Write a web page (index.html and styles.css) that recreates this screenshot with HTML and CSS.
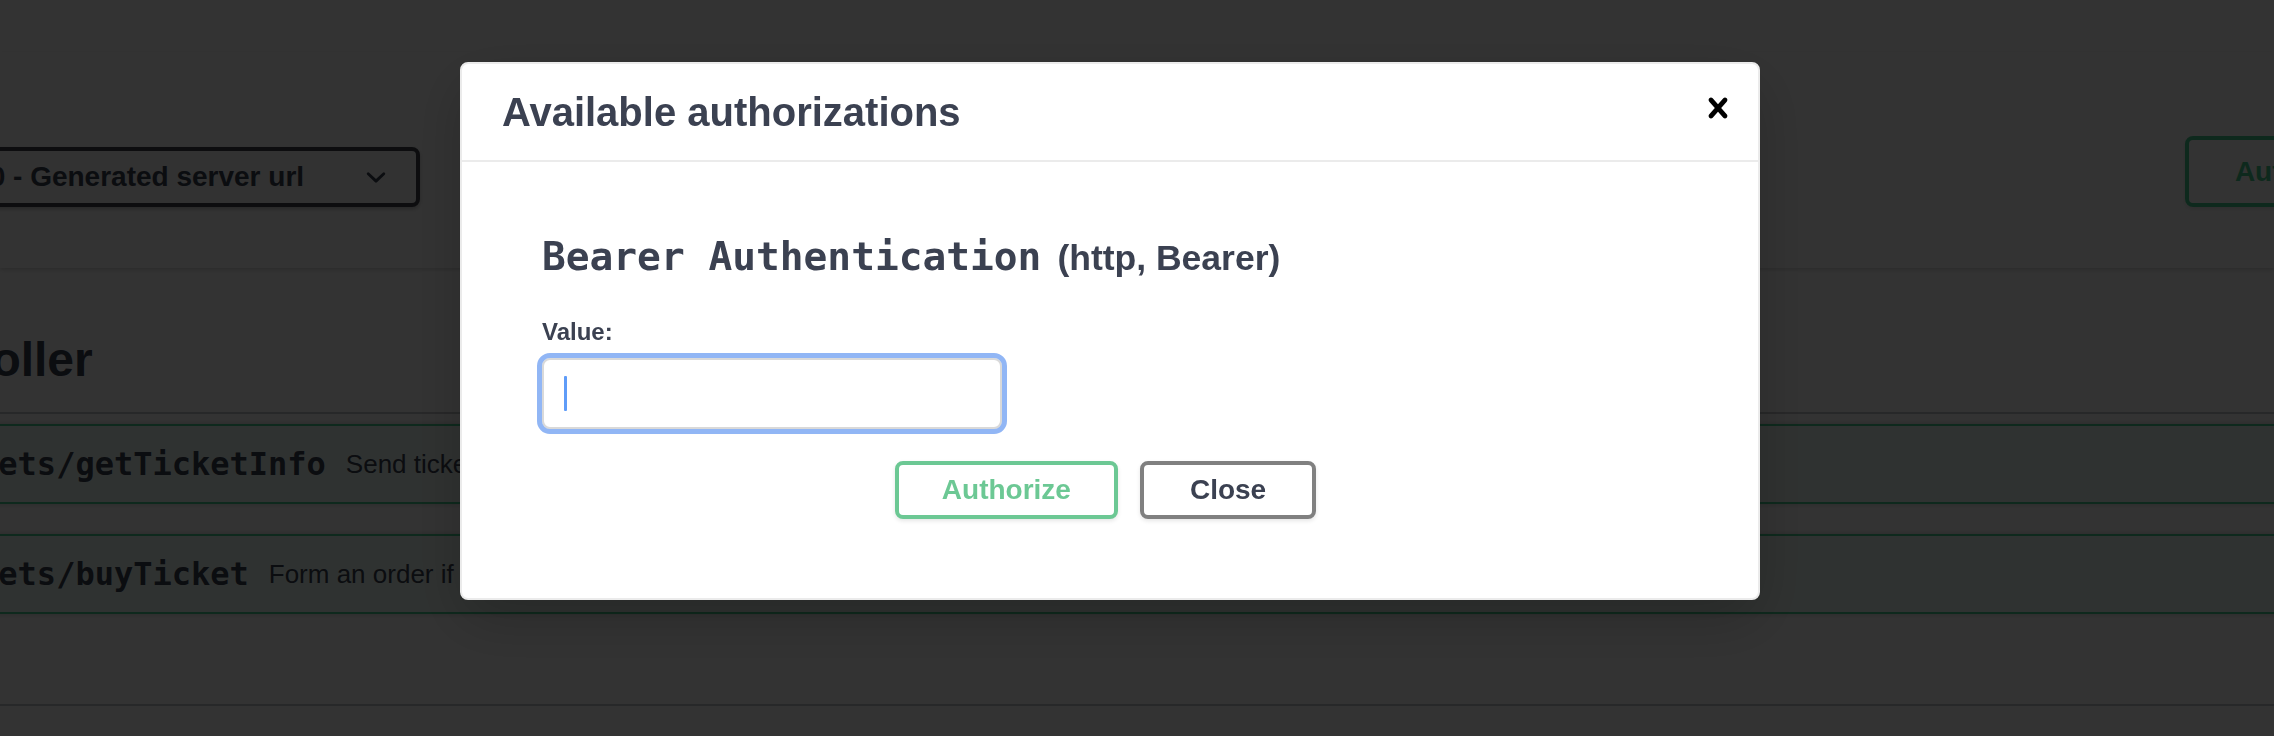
FILE: index.html
```html
<!DOCTYPE html>
<html lang="en">
<head>
<meta charset="utf-8">
<title>Swagger UI</title>
<link rel="stylesheet" href="styles.css">
</head>
<body>
<div class="page">
  <div class="info-tail"></div>
  <section class="scheme-container">
    <div class="wrapper schemes">
      <div class="servers">
        <span class="servers-title">Servers</span>
        <div class="select">
          <span class="select-text">http://localhost:8080 - Generated server url</span>
          <svg class="select-arrow" viewBox="0 0 20 20" width="40" height="40"><path d="M13.418 7.859a.695.695 0 01.978 0 .68.68 0 010 .969l-3.908 3.83a.697.697 0 01-.979 0l-3.908-3.83a.68.68 0 010-.969.695.695 0 01.978 0L10 11l3.418-3.141z"/></svg>
        </div>
      </div>
      <button class="page-authorize" type="button">
        <span>Authorize</span>
        <svg viewBox="0 0 20 20" width="40" height="40"><path d="M15.8 8H14V5.6C14 2.703 12.665 1 10 1 7.334 1 6 2.703 6 5.6V8H4c-.553 0-1 .646-1 1.199V17c0 .549.428 1.139.951 1.307l1.197.387C5.672 18.861 6.55 19 7.1 19h5.8c.549 0 1.428-.139 1.951-.307l1.196-.387c.524-.167.953-.757.953-1.306V9.199C17 8.646 16.352 8 15.8 8zM12 8H8V5.199C8 3.754 8.797 3 10 3c1.203 0 2 .754 2 2.199V8z"/></svg>
      </button>
    </div>
  </section>

  <section class="wrapper operations">
    <h3 class="opblock-tag"><span>ticket-controller</span></h3>
    <div class="opblock">
      <div class="opblock-summary">
        <span class="method">POST</span>
        <span class="path">/tickets/getTicketInfo</span>
        <span class="desc">Send ticket info request</span>
      </div>
    </div>
    <div class="opblock">
      <div class="opblock-summary">
        <span class="method">POST</span>
        <span class="path">/tickets/buyTicket</span>
        <span class="desc">Form an order if seats are available</span>
      </div>
    </div>
    <div class="tag-end"></div>
  </section>
</div>

<div class="backdrop"></div>

<div class="modal" role="dialog" aria-label="Available authorizations">
  <div class="modal-header">
    <h3 class="modal-title">Available authorizations</h3>
    <button class="close-modal" type="button" aria-label="Close">
      <svg viewBox="0 0 20 20" width="40" height="40"><path d="M14.348 14.849c-.469.469-1.229.469-1.697 0L10 11.819l-2.651 3.029c-.469.469-1.229.469-1.697 0-.469-.469-.469-1.229 0-1.697l2.758-3.150-2.759-3.152c-.469-.469-.469-1.228 0-1.697.469-.469 1.228-.469 1.697 0L10 8.183l2.651-3.031c.469-.469 1.228-.469 1.697 0 .469.469.469 1.229 0 1.697l-2.758 3.152 2.758 3.150c.469.469.469 1.229 0 1.698z"/></svg>
    </button>
  </div>
  <div class="modal-content">
    <div class="auth-container">
      <h4 class="auth-title"><code>Bearer Authentication</code><span class="auth-type">(http, Bearer)</span></h4>
      <label class="field-label">Value:</label>
      <div class="input" role="textbox"><span class="caret"></span></div>
      <div class="auth-btn-wrapper">
        <button class="btn btn-authorize" type="button">Authorize</button>
        <button class="btn btn-close" type="button">Close</button>
      </div>
    </div>
  </div>
</div>
</body>
</html>
```

FILE: styles.css
```css
html, body {
  margin: 0;
  padding: 0;
  width: 2274px;
  height: 736px;
  overflow: hidden;
  background: #fff;
  font-family: "Liberation Sans", Arial, sans-serif;
  color: #3b4151;
}

.page {
  width: 2274px;
}

.wrapper {
  width: 2784px;
  margin-left: -290px;
  box-sizing: border-box;
}

.info-tail {
  height: 52px;
  background: #fff;
}

.scheme-container {
  background: #fff;
  box-shadow: 0 2px 4px 0 rgba(0, 0, 0, .15);
  padding: 60px 0 61px;
  margin-bottom: 40px;
}

.schemes {
  height: 95px;
  display: flex;
  align-items: flex-end;
  justify-content: space-between;
}

.servers {
  display: flex;
  flex-direction: column;
}

.servers-title {
  font-size: 24px;
  font-weight: 700;
  line-height: 28px;
  margin-bottom: 7px;
}

.select {
  width: 710px;
  height: 60px;
  box-sizing: border-box;
  display: flex;
  align-items: center;
  padding: 0 20px 0 19px;
  border: 4px solid #41444e;
  border-radius: 8px;
  background: #f7f7f7;
  box-shadow: 0 2px 4px 0 rgba(0, 0, 0, .25);
  font-size: 28px;
  font-weight: 700;
  color: #3b4151;
  white-space: nowrap;
}

.select-arrow {
  margin-left: auto;
  fill: #3b4151;
  flex: none;
}

.page-authorize {
  height: 71px;
  display: flex;
  align-items: center;
  gap: 40px;
  padding: 0 46px;
  margin: 0;
  border: 4px solid #49cc90;
  border-radius: 8px;
  background: transparent;
  color: #49cc90;
  font-family: "Liberation Sans", Arial, sans-serif;
  font-size: 28px;
  font-weight: 700;
  box-shadow: 0 2px 4px rgba(0, 0, 0, .1);
}

.page-authorize svg {
  fill: #49cc90;
}

.opblock-tag {
  margin: 0 0 10px;
  padding: 20px 40px 20px 20px;
  font-size: 48px;
  font-weight: 700;
  line-height: 64px;
  border-bottom: 2px solid rgba(59, 65, 81, .3);
  display: flex;
  align-items: center;
  white-space: nowrap;
}

.opblock {
  margin: 0 0 30px;
  border: 2px solid #49cc90;
  border-radius: 8px;
  background: rgba(73, 204, 144, .1);
  box-shadow: 0 0 6px rgba(0, 0, 0, .19);
}

.opblock-summary {
  display: flex;
  align-items: center;
  padding: 10px;
  white-space: nowrap;
}

.method {
  min-width: 160px;
  padding: 12px 0;
  line-height: 32px;
  font-size: 28px;
  font-weight: 700;
  text-align: center;
  color: #fff;
  background: #49cc90;
  border-radius: 6px;
}

.path {
  padding: 0 20px;
  font-family: "DejaVu Sans Mono", "Liberation Mono", monospace;
  font-size: 32px;
  font-weight: 700;
  color: #3b4151;
}

.desc {
  font-size: 26px;
  color: #3b4151;
}

.tag-end {
  height: 60px;
  border-bottom: 2px solid rgba(59, 65, 81, .3);
}

.backdrop {
  position: fixed;
  inset: 0;
  background: rgba(0, 0, 0, .8);
  z-index: 1;
}

.modal {
  position: fixed;
  left: 460px;
  top: 62px;
  width: 1300px;
  box-sizing: border-box;
  background: #fff;
  border: 2px solid #ebebeb;
  border-radius: 8px;
  box-shadow: 0 20px 60px 0 rgba(0, 0, 0, .2);
  z-index: 2;
}

.modal-header {
  height: 96px;
  display: flex;
  align-items: center;
  padding: 0 20px 0 40px;
  border-bottom: 2px solid #ebebeb;
}

.modal-title {
  flex: 1;
  margin: 0;
  font-size: 40px;
  font-weight: 700;
  color: #3b4151;
}

.close-modal {
  width: 40px;
  height: 40px;
  margin: -8px 0 0;
  padding: 0;
  border: none;
  background: none;
  display: flex;
}

.close-modal svg {
  fill: #000;
}

.modal-content {
  padding: 40px;
}

.auth-container {
  padding: 20px 40px;
}

.auth-title {
  margin: 10px 0 36px;
  font-size: 35px;
  line-height: 48px;
  font-weight: 700;
  color: #3b4151;
  white-space: nowrap;
}

.auth-title code {
  font-family: "DejaVu Sans Mono", "Liberation Mono", monospace;
  font-size: 39.5px;
  font-weight: 700;
}

.auth-type {
  margin-left: 16px;
  font-size: 35.5px;
}

.field-label {
  display: block;
  margin: 0 0 12px;
  font-size: 24px;
  line-height: 28px;
  font-weight: 700;
  color: #3b4151;
}

.input {
  width: 460px;
  height: 71px;
  box-sizing: border-box;
  margin-bottom: 12px;
  padding: 16px 20px;
  border: 2px solid #d9d9d9;
  border-radius: 8px;
  background: #fff;
  box-shadow: 0 2px 4px rgba(0, 0, 0, .1);
  outline: 5px solid #91b6f5;
  display: flex;
}

.caret {
  width: 3px;
  height: 35px;
  background: #5f9cf8;
  border-radius: 1px;
}

.auth-btn-wrapper {
  display: flex;
  justify-content: center;
  padding: 20px 9px 19px 0;
}

.btn {
  margin: 0;
  padding: 10px 46px;
  border: 4px solid #888;
  border-radius: 8px;
  background: #fff;
  font-family: "Liberation Sans", Arial, sans-serif;
  font-size: 28px;
  line-height: 30px;
  font-weight: 700;
  box-shadow: 0 2px 4px rgba(0, 0, 0, .1);
}

.btn-authorize {
  margin-right: 22px;
  padding: 10px 43px;
  color: #6cc894;
  border-color: #6cc894;
}

.btn-close {
  color: #3b4151;
  border-color: #808080;
}
```
